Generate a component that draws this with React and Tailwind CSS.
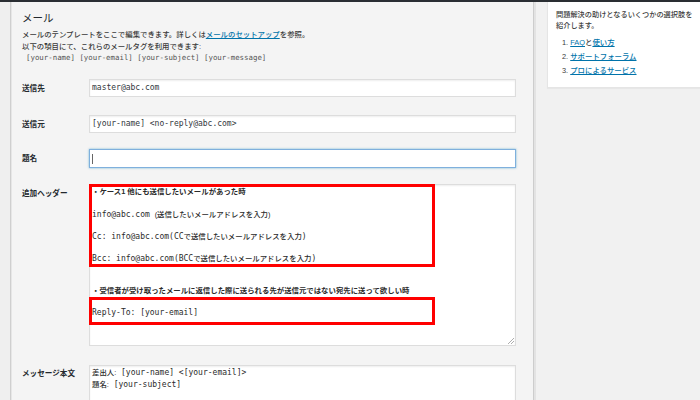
import React from "react";

function J({ children, b }) {
  return b ? (
    <span className="font-['Liberation_Sans','Noto_Sans_CJK_JP',sans-serif] text-[7.4px] font-semibold">{children}</span>
  ) : (
    <span className="font-['Liberation_Sans','Noto_Sans_CJK_JP',sans-serif] text-[7.4px] font-medium">{children}</span>
  );
}

function Label({ children, pt }) {
  return (
    <div className={"w-[67px] shrink-0 text-[7.6px] font-bold leading-[11px] text-[#23282d] " + (pt || "")}>
      {children}
    </div>
  );
}

export default function App() {
  return (
    <div className="w-[700px] h-[400px] overflow-hidden bg-[#f1f1f1] flex flex-col font-['Liberation_Sans','Noto_Sans_CJK_JP',sans-serif]">
      <div className="h-[2px] shrink-0 bg-[#2a2e33]" />
      <div className="flex flex-1 min-h-0">
        <div className="w-[10px] shrink-0 bg-[#efefef]" />
        <div className="w-[2px] shrink-0 border-l border-[#cfcfcf] bg-[#e6e6e6]" />
        <main className="w-[521px] shrink-0 bg-[#f4f4f4] pl-[10px]">
          <h2 className="mt-[9px] h-[14px] leading-[14px] text-[10.5px] text-[#23282d]">メール</h2>
          <div className="mt-[4px] text-[7.4px] leading-[11.5px] text-[#3a3a3a] font-medium">
            <div>
              メールのテンプレートをここで編集できます。詳しくは
              <span className="text-[#0073aa] underline">メールのセットアップ</span>を参照。
            </div>
            <div>以下の項目にて、これらのメールタグを利用できます:</div>
            <div className="ml-[4px] font-['DejaVu_Sans_Mono',monospace] font-normal text-[7.4px] text-[#555]">
              [your-name] [your-email] [your-subject] [your-message]
            </div>
          </div>

          <div className="mt-[15.5px] flex items-center">
            <Label>送信先</Label>
            <div className="w-[427px] h-[18px] bg-white border border-[#dddddd] shadow-[inset_0_1px_2px_rgba(0,0,0,0.07)] px-[2px] flex items-center font-['DejaVu_Sans_Mono','Noto_Sans_CJK_JP',monospace] text-[8px] text-[#32373c]">
              master@abc.com
            </div>
          </div>

          <div className="mt-[18px] flex items-center">
            <Label>送信元</Label>
            <div className="w-[427px] h-[18px] bg-white border border-[#dddddd] shadow-[inset_0_1px_2px_rgba(0,0,0,0.07)] px-[2px] flex items-center font-['DejaVu_Sans_Mono','Noto_Sans_CJK_JP',monospace] text-[8px] text-[#32373c]">
              [your-name] &lt;no-reply@abc.com&gt;
            </div>
          </div>

          <div className="mt-[16px] flex items-center">
            <Label>題名</Label>
            <div className="w-[427px] h-[19px] bg-white border border-[#7fb0dd] shadow-[0_0_2px_rgba(30,140,190,0.6)] px-[2px] flex items-center">
              <span className="w-px h-[10px] bg-[#666]" />
            </div>
          </div>

          <div className="mt-[16px] flex items-start">
            <Label pt="pt-[3.5px]">追加ヘッダー</Label>
            <div className="relative w-[427px] h-[162px] bg-white border border-[#dddddd] shadow-[inset_0_1px_2px_rgba(0,0,0,0.07)] pl-[2px] font-['DejaVu_Sans_Mono','Noto_Sans_CJK_JP',monospace] text-[8px] text-[#2a2a2a]">
              <div className="mt-[1px] h-[11px] leading-[11px] whitespace-nowrap">
                <J b>・ケース1 他にも送信したいメールがあった時</J>
              </div>
              <div className="mt-[11.5px] h-[11px] leading-[11px] whitespace-nowrap">
                info@abc.com <J>(送信したいメールアドレスを入力)</J>
              </div>
              <div className="mt-[11px] h-[11px] leading-[11px] whitespace-nowrap">
                Cc: info@abc.com(CC<J>で送信したいメールアドレスを入力</J>)
              </div>
              <div className="mt-[11px] h-[11px] leading-[11px] whitespace-nowrap">
                Bcc: info@abc.com(BCC<J>で送信したいメールアドレスを入力</J>)
              </div>
              <div className="mt-[21px] h-[11px] leading-[11px] whitespace-nowrap">
                <J b>・受信者が受け取ったメールに返信した際に送られる先が送信元ではない宛先に送って欲しい時</J>
              </div>
              <div className="mt-[11px] h-[11px] leading-[11px] whitespace-nowrap">
                Reply-To: [your-email]
              </div>
              <div className="absolute left-[-1px] top-[-1px] w-[346px] h-[83px] border-[3px] border-[#ff0000]" />
              <div className="absolute left-[-1px] top-[112px] w-[346px] h-[28px] border-[3px] border-[#ff0000]" />
              <svg className="absolute right-[1px] bottom-[1px]" width="7" height="7" viewBox="0 0 7 7">
                <line x1="1" y1="7" x2="7" y2="1" stroke="#999" strokeWidth="0.8" />
                <line x1="4" y1="7" x2="7" y2="4" stroke="#999" strokeWidth="0.8" />
              </svg>
            </div>
          </div>

          <div className="mt-[19px] flex items-start">
            <Label pt="pt-[2.5px]">メッセージ本文</Label>
            <div className="w-[427px] h-[60px] bg-white border border-[#dddddd] shadow-[inset_0_1px_2px_rgba(0,0,0,0.07)] pt-[1px] pl-[2px] leading-[12px] font-['DejaVu_Sans_Mono','Noto_Sans_CJK_JP',monospace] text-[8px] text-[#2a2a2a]">
              <div className="whitespace-nowrap">
                <J>差出人:</J> [your-name] &lt;[your-email]&gt;
              </div>
              <div className="whitespace-nowrap">
                <J>題名:</J> [your-subject]
              </div>
            </div>
          </div>
        </main>
        <div className="w-[3px] shrink-0 border-l border-[#cdcdcd] bg-[#e3e3e3]" />
        <aside className="flex-1 pl-[11px] overflow-hidden">
          <div className="w-[170px] h-[86px] bg-white border border-t-0 border-[#e5e5e5] shadow-[0_1px_1px_rgba(0,0,0,0.04)] pt-[6.5px] px-[8px] text-[7.2px] leading-[11px] text-[#3a3a3a] font-medium">
            <div>問題解決の助けとなるいくつかの選択肢を</div>
            <div>紹介します。</div>
            <ol className="mt-[5.5px] pl-[6px] leading-[14px] text-[7.4px]">
              <li>
                1. <span className="text-[#0073aa] underline">FAQ</span>と
                <span className="text-[#0073aa] underline">使い方</span>
              </li>
              <li>
                2. <span className="text-[#0073aa] underline">サポートフォーラム</span>
              </li>
              <li>
                3. <span className="text-[#0073aa] underline">プロによるサービス</span>
              </li>
            </ol>
          </div>
        </aside>
      </div>
    </div>
  );
}
